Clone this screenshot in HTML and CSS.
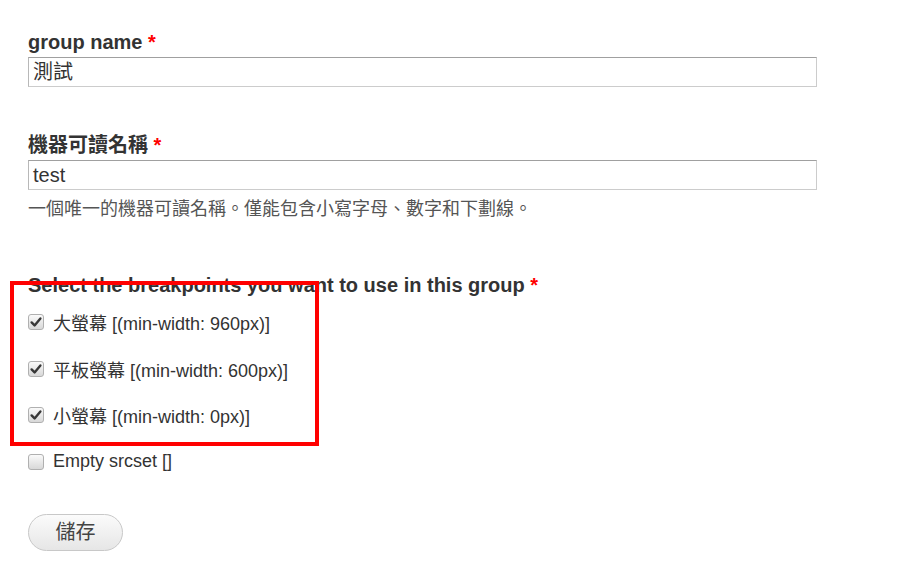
FILE: index.html
```html
<!DOCTYPE html>
<html lang="zh-Hant">
<head>
<meta charset="utf-8">
<title>group</title>
<link rel="stylesheet" href="styles.css">
</head>
<body>
<form class="form">
  <div class="item item-first">
    <label class="label">group name <span class="req">*</span></label>
    <div class="input">測試</div>
  </div>
  <div class="item item-second">
    <label class="label">機器可讀名稱 <span class="req">*</span></label>
    <div class="input">test</div>
    <div class="desc">一個唯一的機器可讀名稱。僅能包含小寫字母、數字和下劃線。</div>
  </div>
  <div class="item item-third">
    <label class="label">Select the breakpoints you want to use in this group <span class="req">*</span></label>
    <div class="checks">
      <div class="check"><span class="box"><svg class="tick" viewBox="0 0 14 14"><path d="M2.6 7.4 L5.6 10.4 L11.4 3.4"/></svg></span><span>大螢幕 [(min-width: 960px)]</span></div>
      <div class="check"><span class="box"><svg class="tick" viewBox="0 0 14 14"><path d="M2.6 7.4 L5.6 10.4 L11.4 3.4"/></svg></span><span>平板螢幕 [(min-width: 600px)]</span></div>
      <div class="check"><span class="box"><svg class="tick" viewBox="0 0 14 14"><path d="M2.6 7.4 L5.6 10.4 L11.4 3.4"/></svg></span><span>小螢幕 [(min-width: 0px)]</span></div>
      <div class="check"><span class="box"></span><span>Empty srcset []</span></div>
    </div>
  </div>
  <div class="actions"><span class="button">儲存</span></div>
</form>
<div class="highlight"></div>
</body>
</html>
```

FILE: styles.css
```css
html, body {
  margin: 0;
  padding: 0;
  background: #fff;
}
body {
  font-family: "Liberation Sans", "Noto Sans CJK TC", sans-serif;
  color: #333;
  position: relative;
}
.form {
  padding: 30px 28px 0 28px;
}
.label {
  display: block;
  font-size: 20px;
  font-weight: bold;
  line-height: 24px;
  color: #333;
}
.req {
  color: #f00;
}
.input {
  box-sizing: border-box;
  margin-top: 3px;
  width: 789px;
  height: 30px;
  border: 1px solid #ccc;
  border-top-color: #a0a0a0;
  border-left-color: #b8b8b8;
  padding: 0 4px;
  font-size: 20px;
  line-height: 28px;
  color: #333;
}
.item-second {
  margin-top: 46px;
}
.desc {
  margin-top: 8px;
  font-size: 18px;
  line-height: 22px;
  color: #555;
}
.item-third {
  margin-top: 53px;
}
.checks {
  margin-top: 13px;
  display: flex;
  flex-direction: column;
  gap: 22.5px;
}
.check {
  display: flex;
  align-items: center;
  height: 24px;
  font-size: 18px;
  color: #333;
}
.box {
  box-sizing: border-box;
  width: 16px;
  height: 16px;
  margin-left: 0;
  margin-right: 9px;
  border: 1px solid #b0b0b0;
  border-radius: 3px;
  background: linear-gradient(#fafafa, #d8d8d8);
  display: flex;
  align-items: center;
  justify-content: center;
}
.tick {
  width: 14px;
  height: 14px;
  fill: none;
  stroke: #383838;
  stroke-width: 2.4;
  stroke-linecap: round;
  stroke-linejoin: round;
}
.actions {
  margin-top: 40px;
}
.button {
  display: inline-block;
  box-sizing: border-box;
  width: 95px;
  height: 37px;
  border: 1px solid #c8c8c8;
  border-radius: 19px;
  background: linear-gradient(#fbfbfb, #e6e6e6);
  text-align: center;
  font-size: 20px;
  line-height: 35px;
  color: #444;
}
.highlight {
  position: absolute;
  left: 10px;
  top: 281px;
  width: 309px;
  height: 165px;
  box-sizing: border-box;
  border: 4px solid #f00;
}
```
